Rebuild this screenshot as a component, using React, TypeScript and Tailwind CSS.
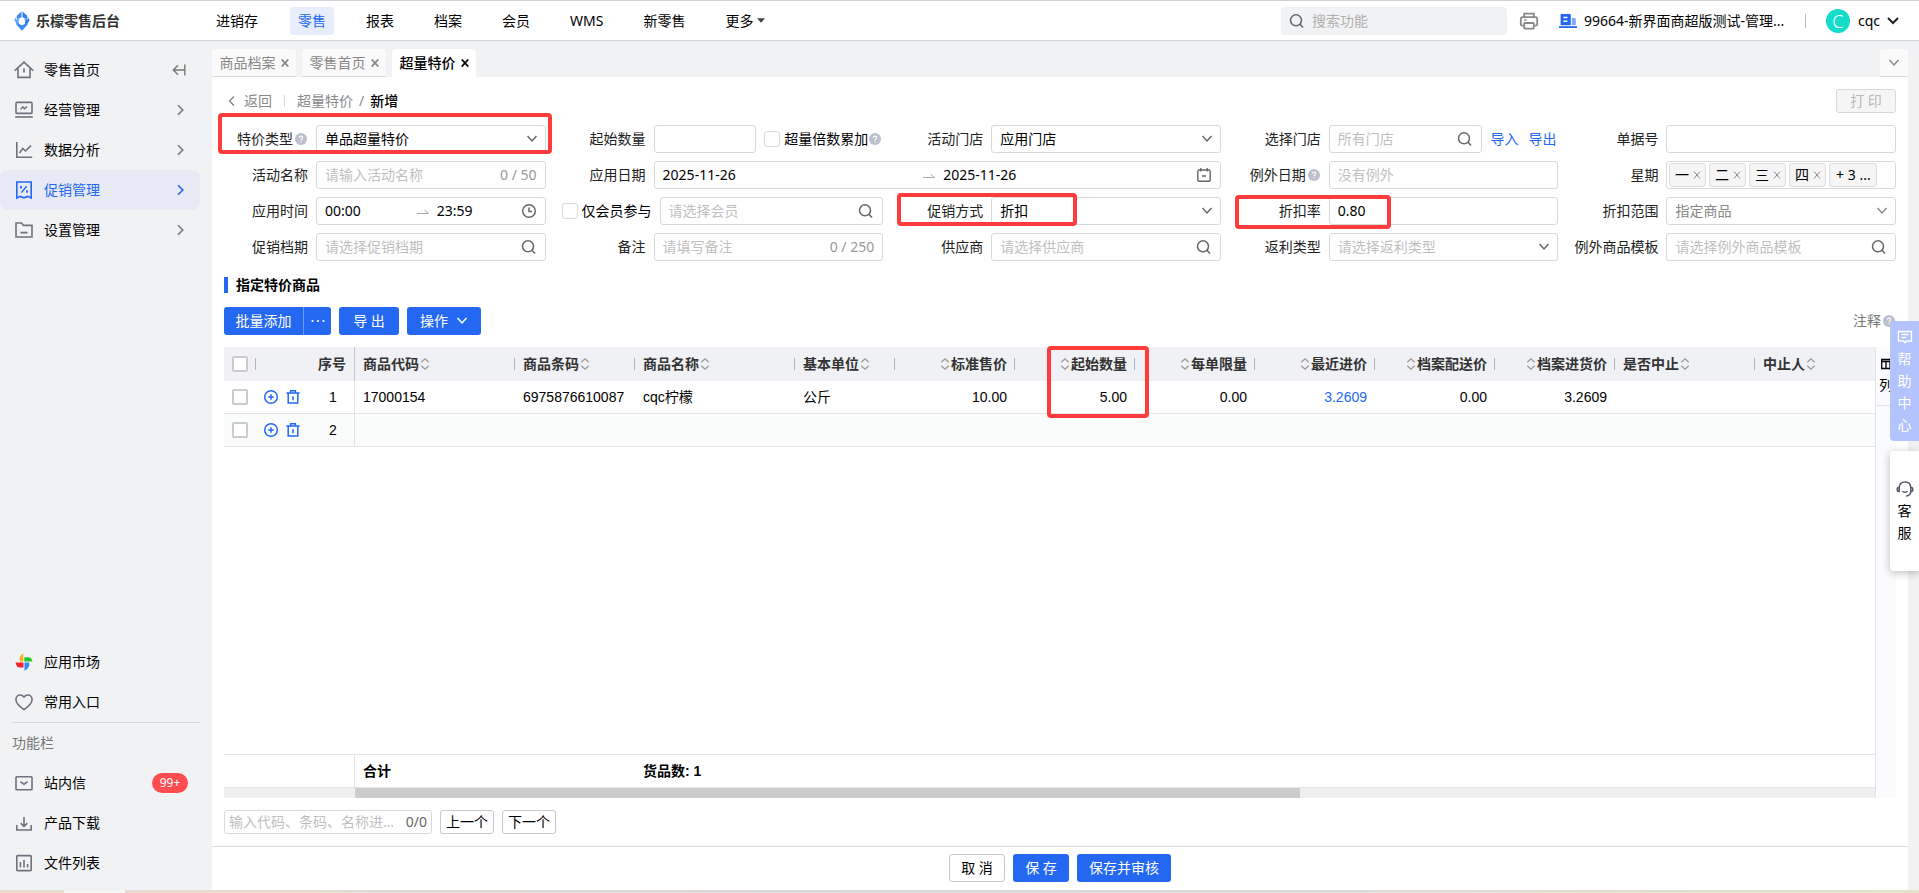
import type { ReactNode } from "react";

/* ---------- icons ---------- */

type IconProps = { className?: string };

function Stroke({ className = "", size = 16, width = 1.5, box = 16, children }: IconProps & { size?: number; width?: number; box?: number; children: ReactNode }) {
  return (
    <svg className={`shrink-0 ${className}`} width={size} height={size} viewBox={`0 0 ${box} ${box}`} fill="none" stroke="currentColor" strokeWidth={width} aria-hidden="true">
      {children}
    </svg>
  );
}

const SearchIcon = ({ className = "text-[#666]" }: IconProps) => (
  <Stroke className={className}><circle cx="7" cy="7.3" r="5.5" /><path d="M11 11.3 14 14.6" /></Stroke>
);
const DownIcon = ({ className = "text-[#666]" }: IconProps) => (
  <Stroke className={className} size={12} box={12}><path d="M1.5 3 6 8l4.500-5" /></Stroke>
);
const ClockIcon = () => (
  <Stroke className="text-[#666]"><circle cx="8" cy="8" r="6.3" /><path d="M8 4.5V8.5h3.2" /></Stroke>
);
const CalendarIcon = () => (
  <Stroke className="text-[#666]" width={1.4}><rect x="1.8" y="3" width="12.4" height="11.3" rx="1.5" /><path d="M4.8 1v3.6M11.2 1v3.6M6 9h4" /></Stroke>
);
const RangeArrow = () => (
  <Stroke className="text-[#aaa]" size={12} box={12} width={1}><path d="M0 8.5h11.5L7.5 5" /></Stroke>
);
const CloseIcon = ({ className = "" }: IconProps) => (
  <Stroke className={className} size={8} box={8} width={1}><path d="M1 0.5 7 7.5M7 0.5 1 7.5" /></Stroke>
);
const TabCloseIcon = () => (
  <Stroke size={8} box={8} width={1.8}><path d="M.7.5l6.6 7M7.3.5.7 7.5" /></Stroke>
);
const HelpIcon = ({ className = "" }: IconProps) => (
  <svg className={`shrink-0 ${className}`} width="12" height="12" viewBox="0 0 12 12" aria-hidden="true">
    <circle cx="6" cy="6" r="6" fill="#bcc0cc" />
    <path d="M4.3 4.8C4.3 3.7 5 3.1 6 3.1s1.7.6 1.7 1.5C7.7 5.7 6 5.8 6 7.2M6 8.2v1.1" fill="none" stroke="#fff" strokeWidth="1.1" />
  </svg>
);
const SortIcon = () => (
  <Stroke className="text-[#999]" size={12} box={12} width={1.2}><path d="M2.3 4.2 6 .8l3.7 3.4M2.3 7.8 6 11.2l3.7-3.4" /></Stroke>
);
const HomeIcon = () => (
  <Stroke size={20} box={20} width={1.6}><path d="M.8 10.6 10 2.2l9.2 8.4M4 8.6v8.8h12V8.6M10 8.2v4.2" /></Stroke>
);
const MonitorIcon = () => (
  <Stroke size={20} box={20} width={1.6}><rect x="2" y="2.4" width="16" height="11" rx=".8" /><path d="M1.2 17h17.6" /><path d="m6.6 9.4 2.2-2.6 1.6 2 2.6-2.2" strokeWidth="1.4" /></Stroke>
);
const TrendIcon = () => (
  <Stroke size={20} box={20} width={1.6}><path d="M2.8 2v15.2h15.4M5.6 13l3.2-4.6 2.6 2.6 5.6-5.4" /></Stroke>
);
const PromoIcon = () => (
  <Stroke size={20} box={20} width={1.6}><path d="M2.8 2h14.4v16l-3.4-1.6L10 17.8l-3.8-1.4L2.8 18Z" /><path d="m7.4 12.6 5.2-6.4" strokeWidth="1.4" /><path d="M7 6v2.6M13 10.2v2.6" strokeWidth="1.8" /></Stroke>
);
const FolderIcon = () => (
  <Stroke size={20} box={20} width={1.6}><path d="M2 3h5.6l1.8 2.4H18V17H2ZM6.4 12.6h7.2" /></Stroke>
);
const HeartIcon = () => (
  <Stroke size={20} box={20} width={1.6}><path d="M10 17.6C4.6 14 1.9 11 1.9 7.6 1.9 4.8 3.9 3 6.2 3c1.6 0 3 .9 3.8 2 .8-1.1 2.2-2 3.8-2 2.3 0 4.3 1.8 4.3 4.6 0 3.4-2.7 6.4-8.1 10Z" /></Stroke>
);
const MailIcon = () => (
  <Stroke size={20} box={20} width={1.6}><rect x="2" y="3.8" width="16" height="13" rx=".8" /><path d="m6.4 8.6 3.6 2.6 3.6-2.6" /></Stroke>
);
const DownloadIcon = () => (
  <Stroke size={20} box={20} width={1.6}><path d="M2.8 12v5h14.4v-5M10 4v9.4M6.6 10.2 10 13.4l3.4-3.2" /></Stroke>
);
const ReportIcon = () => (
  <Stroke size={20} box={20} width={1.6}><rect x="2.8" y="2.6" width="14.4" height="15" rx=".8" /><path d="M6.4 9v5.4M10 7v7.4M13.6 11v3.4" /></Stroke>
);
const MarketIcon = () => (
  <svg className="shrink-0" width="20" height="20" viewBox="0 0 20 20" aria-hidden="true">
    <path d="M9.3 1.4C6 3 4.7 6.6 6.2 9.4h3.1Z" fill="#ffb020" />
    <path d="M10.3 5.2h4.2c2 0 3.4 1.6 4 4.2h-8.2Z" fill="#22c72e" />
    <path d="M1.5 10.4h8v5H6c-2.5 0-4-2-4.5-5Z" fill="#f5222d" />
    <path d="M10.5 10.4h4.7c.6 3.4-1 6.6-4.7 8.2Z" fill="#2f8cff" />
  </svg>
);
const LogoIcon = () => (
  <svg className="shrink-0" width="16" height="20" viewBox="0 0 16 20" aria-hidden="true">
    <path d="M7.5.4 2.8 4.8v3.4L7.5 6.2Z" fill="#3f86f8" />
    <path d="M8.5.4 13.2 4.8v3.4L8.5 6.2Z" fill="#2f7df8" />
    <path d="M2.2 5.6.4 9.2l4.2 6.2 1-1.4L4.4 10l1.4-2.6-3.6 1.4Z" fill="#5aa5fb" />
    <path d="M13.8 5.6 15.6 9.2l-4.2 6.2-1-1.4L11.6 10l-1.4-2.6 3.6 1.4Z" fill="#2a76f6" />
    <path d="M8 19.8 2.4 13.6V12L8 14.2 13.6 12v1.6Z" fill="#3b8bfa" />
  </svg>
);
const PrinterIcon = () => (
  <Stroke className="text-[#888]" size={20} box={20} width={1.8}><path d="M5.2 6.2V2.6h9.6v3.6M4.8 14.6H3.2c-.8 0-1.4-.6-1.4-1.4V8c0-1 .8-1.8 1.8-1.8h12.8c1 0 1.8.8 1.8 1.8v5.2c0 .8-.6 1.4-1.4 1.4h-1.6" /><rect x="5.2" y="12" width="9.6" height="5.6" rx=".6" /><path d="M5 9h2.6" strokeWidth="1.4" /></Stroke>
);
const BuildingIcon = () => (
  <svg className="shrink-0" width="18" height="16" viewBox="0 0 18 16" aria-hidden="true">
    <path d="M2.6 1h8.2c.6 0 1 .4 1 1v10.2H1.6V2c0-.6.4-1 1-1Z" fill="#2468f2" />
    <path d="M12.8 5h3c.6 0 1 .4 1 1v6.2h-4Z" fill="#7ea8f8" />
    <path d="M0 13.2h18V15H0Z" fill="#2468f2" />
    <path d="M4.4 4.6h4M4.4 8.2h4" stroke="#fff" strokeWidth="1.5" />
  </svg>
);
const PlusIcon = () => (
  <Stroke width={1.5}><circle cx="8" cy="8" r="6.3" /><path d="M5.2 8h5.6M8 5.2v5.6" /></Stroke>
);
const TrashIcon = () => (
  <Stroke width={1.5}><path d="M1.4 4h13.2M3.2 4v10h9.6V4M5.6 3.6V1.7h4.8v1.9M8 7.2v4" /></Stroke>
);

/* ---------- form pieces ---------- */

const box = "h-7 rounded-[3px] border border-[#d9d9d9] bg-white";
const Mark = ({ className }: { className: string }) => (
  <div className={`pointer-events-none absolute z-10 rounded-[4px] border-4 border-[#ff3b3b] ${className}`} />
);

function Field({ label, id, help, mark, className = "", children }: { label: string; id: string; help?: boolean; mark?: string; className?: string; children: ReactNode }) {
  return (
    <div className={`relative flex min-w-0 items-center gap-2 ${className}`}>
      <label htmlFor={id} className="flex w-[92px] shrink-0 items-center justify-end gap-0.5 whitespace-nowrap text-[#222]">
        {label}
        {help && <HelpIcon className="mr-px" />}
      </label>
      <div className="flex min-w-0 flex-1 items-center">{children}</div>
      {mark && <Mark className={mark} />}
    </div>
  );
}

function TextBox({ id, placeholder, value, icon, suffix }: { id: string; placeholder?: string; value?: string; icon?: ReactNode; suffix?: string }) {
  return (
    <div className={`${box} flex min-w-0 flex-1 items-center px-2`}>
      <input id={id} defaultValue={value} placeholder={placeholder} className="w-full min-w-0 flex-1 bg-transparent outline-none placeholder:text-[#bfbfbf]" />
      {suffix && <span className="shrink-0 text-[#999]">{suffix}</span>}
      {icon}
    </div>
  );
}

function RangeBox({ id, from, to, endLabel, icon }: { id: string; from: string; to: string; endLabel: string; icon: ReactNode }) {
  return (
    <div className={`${box} flex min-w-0 flex-1 items-center px-2`}>
      <input id={id} defaultValue={from} className="mr-2 min-w-0 flex-1 outline-none" />
      <RangeArrow />
      <input aria-label={endLabel} defaultValue={to} className="ml-2 min-w-0 flex-1 outline-none" />
      {icon}
    </div>
  );
}

function Select({ id, value, tone = "text-black", arrow }: { id: string; value: string; tone?: string; arrow?: string }) {
  return (
    <div className={`${box} relative min-w-0 flex-1`}>
      <select id={id} className={`h-full w-full appearance-none bg-transparent px-2 outline-none ${tone}`}>
        <option>{value}</option>
      </select>
      <DownIcon className={`pointer-events-none absolute top-[7px] right-[7px] ${arrow ?? "text-[#666]"}`} />
    </div>
  );
}

function Check({ id, label, className = "size-4 rounded-[3px] border border-[#d9d9d9]" }: { id: string; label?: string; className?: string }) {
  return <input id={id} type="checkbox" aria-label={label} className={`shrink-0 appearance-none bg-white checked:bg-[#2468f2] ${className}`} />;
}

function FilterForm() {
  return (
    <form className="-ml-2 grid grid-cols-5 gap-2">
      <Field id="kind" label="特价类型" help mark="-top-3 left-0.5 -right-1.5 -bottom-px">
        <Select id="kind" value="单品超量特价" />
      </Field>
      <Field id="start" label="起始数量">
        <TextBox id="start" />
        <div className="flex w-[127px] shrink-0 items-center pl-2">
          <Check id="multi" />
          <label htmlFor="multi" className="pl-1 whitespace-nowrap">超量倍数累加</label>
          <HelpIcon className="ml-px" />
        </div>
      </Field>
      <Field id="store" label="活动门店"><Select id="store" value="应用门店" /></Field>
      <Field id="pick" label="选择门店">
        <TextBox id="pick" placeholder="所有门店" icon={<SearchIcon />} />
        <a href="#import" className="pl-2 text-[#2468f2]">导入</a>
        <a href="#export" className="pr-0.5 pl-2.5 text-[#2468f2]">导出</a>
      </Field>
      <Field id="bill" label="单据号"><TextBox id="bill" /></Field>

      <Field id="name" label="活动名称"><TextBox id="name" placeholder="请输入活动名称" suffix="0 / 50" /></Field>
      <Field id="date" label="应用日期" className="col-span-2">
        <RangeBox id="date" from="2025-11-26" to="2025-11-26" endLabel="结束日期" icon={<CalendarIcon />} />
      </Field>
      <Field id="except" label="例外日期" help><TextBox id="except" placeholder="没有例外" /></Field>
      <Field id="week" label="星期">
        <div className={`${box} flex min-w-0 flex-1 items-center gap-[3px] px-0.5`}>
          {["一", "二", "三", "四"].map((d, i) => (
            <button key={d} id={i === 0 ? "week" : undefined} type="button" aria-label={`移除星期${d}`} className="flex h-6 w-[37px] shrink-0 items-center justify-center gap-1 rounded-[3px] border border-[#ddd] bg-[#f5f5f5]">
              {d}<CloseIcon className="text-[#888]" />
            </button>
          ))}
          <span className="flex h-6 w-12 items-center justify-center rounded-[3px] border border-[#ddd] bg-[#f5f5f5] whitespace-nowrap">+ 3 ...</span>
        </div>
      </Field>

      <Field id="time" label="应用时间">
        <RangeBox id="time" from="00:00" to="23:59" endLabel="结束时间" icon={<ClockIcon />} />
      </Field>
      <div className="flex min-w-0 items-center pl-2">
        <Check id="vip" />
        <label htmlFor="vip" className="pr-2 pl-1 whitespace-nowrap">仅会员参与</label>
        <TextBox id="member" placeholder="请选择会员" icon={<SearchIcon />} />
      </div>
      <Field id="way" label="促销方式" mark="-top-1 left-1.5 right-36 -bottom-px">
        <Select id="way" value="折扣" />
      </Field>
      <Field id="rate" label="折扣率" mark="-top-0.5 left-1.5 right-[167px] -bottom-1">
        <TextBox id="rate" value="0.80" />
      </Field>
      <Field id="scope" label="折扣范围"><Select id="scope" value="指定商品" tone="text-[#888]" arrow="text-[#888]" /></Field>

      <Field id="period" label="促销档期"><TextBox id="period" placeholder="请选择促销档期" icon={<SearchIcon />} /></Field>
      <Field id="memo" label="备注"><TextBox id="memo" placeholder="请填写备注" suffix="0 / 250" /></Field>
      <Field id="vendor" label="供应商"><TextBox id="vendor" placeholder="请选择供应商" icon={<SearchIcon />} /></Field>
      <Field id="rebate" label="返利类型"><Select id="rebate" value="请选择返利类型" tone="text-[#bfbfbf]" /></Field>
      <Field id="tpl" label="例外商品模板"><TextBox id="tpl" placeholder="请选择例外商品模板" icon={<SearchIcon />} /></Field>
    </form>
  );
}

/* ---------- goods table ---------- */

const columns = [
  { name: "商品代码", value: "17000154", width: "w-[160px]" },
  { name: "商品条码", value: "6975876610087", width: "w-[120px]" },
  { name: "商品名称", value: "cqc柠檬", width: "w-[160px]" },
  { name: "基本单位", value: "公斤", width: "w-[100px]" },
  { name: "标准售价", value: "10.00", width: "w-[120px]", right: true },
  { name: "起始数量", value: "5.00", width: "w-[120px]", right: true, mark: true },
  { name: "每单限量", value: "0.00", width: "w-[120px]", right: true },
  { name: "最近进价", value: "3.2609", width: "w-[120px]", right: true, link: true },
  { name: "档案配送价", value: "0.00", width: "w-[120px]", right: true },
  { name: "档案进货价", value: "3.2609", width: "w-[120px]", right: true },
  { name: "是否中止", value: "", width: "w-[140px]" },
  { name: "中止人", value: "", width: "w-auto", last: true },
];

const Columns = () => (
  <colgroup>
    <col className="w-[131px]" />
    {columns.map((c) => <col key={c.name} className={c.width} />)}
  </colgroup>
);

const gridCheck = "size-4 rounded-[2px] border-2 border-[#ccc]";

function GoodsTable() {
  return (
    <div className="flex min-h-0 flex-1">
      <div className="flex min-w-0 flex-1 flex-col font-['Liberation_Sans','Noto_Sans_CJK_SC',sans-serif]">
        <table className="w-full table-fixed border-separate border-spacing-0">
          <Columns />
          <thead>
            <tr className="h-[34px] bg-[#f0f1f4] text-[#333]">
              <th className="border-r border-[#c4c6cc] p-0 px-2">
                <div className="flex items-center">
                  <Check id="all" label="全选" className={gridCheck} />
                  <i className="ml-[7px] h-3 w-px bg-[#b0b4c0]" />
                  <span className="ml-auto font-bold">序号</span>
                </div>
              </th>
              {columns.map((c) => (
                <th key={c.name} className="relative p-0 px-2 font-bold">
                  <div className={c.right ? "flex flex-row-reverse items-center" : "flex items-center"}>
                    <span className="whitespace-nowrap">{c.name}</span>
                    <SortIcon />
                  </div>
                  {!c.last && <i className="absolute top-[11px] right-0 h-3 w-px bg-[#b0b4c0]" />}
                  {c.mark && <Mark className="-top-px -right-3.5 left-8 h-[72px]" />}
                </th>
              ))}
            </tr>
          </thead>
          <tbody>
            {[1, 2].map((n) => (
              <tr key={n} className={n === 2 ? "h-[33px] bg-[#fafbfb]" : "h-[33px]"}>
                <td className="border-r border-b border-[#e4e4e4] p-0 pl-2">
                  <div className="flex items-center text-[#2468f2]">
                    <Check id={`row${n}`} label={`选择第${n}行`} className={gridCheck} />
                    <button type="button" aria-label="添加" className="ml-[15px]"><PlusIcon /></button>
                    <button type="button" aria-label="删除" className="ml-1.5"><TrashIcon /></button>
                    <span className="ml-auto w-[42px] text-center text-black">{n}</span>
                  </div>
                </td>
                {columns.map((c) => (
                  <td key={c.name} className={`border-b border-[#e6e6e6] p-0 px-2 whitespace-nowrap ${c.right ? "text-right" : "text-left"} ${c.link ? "text-[#2468f2]" : ""}`}>
                    {n === 1 ? c.value : ""}
                  </td>
                ))}
              </tr>
            ))}
          </tbody>
        </table>
        <div className="flex-1" />
        <table className="w-full table-fixed border-separate border-spacing-0 border-y border-[#e6e6e6]">
          <Columns />
          <tbody>
            <tr className="h-8 font-bold">
              <td className="border-r border-[#e4e4e4]" />
              <td className="px-2 py-0" colSpan={2}>合计</td>
              <td className="px-2 py-0" colSpan={10}>货品数: 1</td>
            </tr>
          </tbody>
        </table>
        <div className="flex h-2.5 bg-[#efefef] pl-[131px]"><div className="w-[62.2%] bg-[#ccc]" /></div>
      </div>
      <aside className="w-[21px] shrink-0 border-l border-[#e3e4e8] bg-[#fafbfd]">
        <button type="button" className="flex h-[59px] w-full flex-col items-start justify-center gap-1 border-b border-[#e3e4e8] pl-[3px] leading-5">
          <Stroke className="ml-0.5 text-black" size={14} box={14} width={1.3}><path d="M.7 2.5h12.6v9H.7zM5 4.500v7M9 4.500v7M.7 4.500h12.600" /></Stroke>
          列
        </button>
      </aside>
    </div>
  );
}

/* ---------- shell ---------- */

const menu = [
  { name: "零售首页", icon: <HomeIcon /> },
  { name: "经营管理", icon: <MonitorIcon /> },
  { name: "数据分析", icon: <TrendIcon /> },
  { name: "促销管理", icon: <PromoIcon />, active: true },
  { name: "设置管理", icon: <FolderIcon /> },
];

const item = "flex h-10 w-full items-center gap-2.5 px-3.5";
const primary = "h-7 rounded-[3px] bg-[#2468f2] text-white";
const plain = "rounded-[3px] border border-[#c9c9c9] bg-white";

function Header() {
  return (
    <header className="flex h-[41px] shrink-0 items-center border-t border-b border-[#d2d2d4] bg-white pr-5 pl-3.5">
      <LogoIcon />
      <h1 className="ml-1.5 w-[164px] shrink-0 font-bold text-[#333]">乐檬零售后台</h1>
      <nav className="ml-2 flex gap-6">
        {["进销存", "零售", "报表", "档案", "会员", "WMS", "新零售", "更多"].map((n) => (
          <a key={n} href={`#${n}`} className={`flex h-7 items-center rounded-[4px] px-2 whitespace-nowrap ${n === "零售" ? "bg-[#e8edfb] text-[#2468f2]" : ""}`}>
            {n}
            {n === "更多" && <svg className="ml-1" width="8" height="5" viewBox="0 0 8 5" aria-hidden="true"><path d="M0 .3h8L4 4.7Z" fill="#444" /></svg>}
          </a>
        ))}
      </nav>
      <div className="ml-auto flex h-7 w-[226px] items-center gap-[7px] rounded-[4px] bg-[#f1f2f4] pl-2">
        <SearchIcon />
        <input aria-label="搜索功能" placeholder="搜索功能" className="min-w-0 flex-1 bg-transparent outline-none placeholder:text-[#b0b0b0]" />
      </div>
      <button type="button" aria-label="打印" className="ml-3"><PrinterIcon /></button>
      <div className="ml-5 flex w-[246px] items-center gap-[7px]">
        <BuildingIcon />
        <span className="whitespace-nowrap">99664-新界面商超版测试-管理...</span>
      </div>
      <i className="h-3.5 w-px bg-[#bbb]" />
      <button type="button" className="ml-5 flex items-center">
        <span className="flex size-6 items-center justify-center rounded-full bg-[#14dccb] text-lg leading-6 font-light text-white">C</span>
        <span className="mr-[7px] ml-2">cqc</span>
        <Stroke className="text-[#222]" size={12} box={12} width={2}><path d="M1 3 6 8l5-5" /></Stroke>
      </button>
    </header>
  );
}

function Sidebar() {
  return (
    <aside className="flex w-[212px] shrink-0 flex-col pt-[9px] pr-3 text-black">
      {menu.map((m, i) => (
        <button key={m.name} type="button" className={`${item} ${m.active ? "rounded-lg bg-[#e7eaf5] text-[#2468f2]" : ""}`}>
          <span className={m.active ? "text-[#2468f2]" : "text-[#70707e]"}>{m.icon}</span>
          {m.name}
          {i === 0 ? (
            <Stroke className="ml-auto text-[#777]" size={14} box={14} width={1.4}><path d="M12.8 1.5v11M12 7H1.5M6 2.2 1.3 7 6 11.8" /></Stroke>
          ) : (
            <Stroke className={m.active ? "ml-auto" : "ml-auto text-[#777]"} size={12} box={12} width={1.6}><path d="M4 1.2 8.8 6 4 10.8" /></Stroke>
          )}
        </button>
      ))}
      <div className="flex-1" />
      <button type="button" className={item}><MarketIcon />应用市场</button>
      <button type="button" className={item}><span className="text-[#70707e]"><HeartIcon /></span>常用入口</button>
      <div className="ml-3 flex h-[41px] items-center border-t border-[#d5d6d9] text-[#777]">功能栏</div>
      <button type="button" className={item}>
        <span className="text-[#70707e]"><MailIcon /></span>站内信
        <span className="mr-[-2px] ml-auto flex h-5 w-9 items-center justify-center rounded-full bg-[#ff4d4f] text-xs text-white">99+</span>
      </button>
      <button type="button" className={item}><span className="text-[#70707e]"><DownloadIcon /></span>产品下载</button>
      <button type="button" className={`${item} mb-[7px]`}><span className="text-[#70707e]"><ReportIcon /></span>文件列表</button>
    </aside>
  );
}

export default function App() {
  return (
    <div className="relative flex h-screen flex-col overflow-hidden bg-[#f1f2f4] font-['Noto_Sans','Noto_Sans_CJK_SC',sans-serif] text-sm leading-5 text-black">
      <Header />
      <div className="flex min-h-0 flex-1">
        <Sidebar />
        <div className="mr-[11px] flex min-w-0 flex-1 flex-col pt-2">
          <div className="flex gap-1.5">
            {["商品档案", "零售首页", "超量特价"].map((t, i) => (
              <button key={t} type="button" className={`flex h-7 w-[84px] items-center justify-center gap-[5px] rounded-t-[4px] ${i === 2 ? "bg-white font-medium" : "border-b border-[#d9d9d9] bg-[#fafafa] text-[#888]"}`}>
                {t}<TabCloseIcon />
              </button>
            ))}
            <button type="button" aria-label="更多标签" className="ml-auto flex h-7 w-7 items-center justify-center rounded-t-[4px] border-b border-[#d9d9d9] bg-[#fafafa]"><DownIcon className="text-[#888]" /></button>
          </div>
          <main className="flex min-h-0 flex-1 flex-col bg-white">
            <div className="flex min-h-0 flex-1 flex-col px-3 pt-3">
              <div className="mb-3 flex h-6 items-center text-[#888]">
                <a href="#back" className="flex items-center gap-1.5 pl-0.5">
                  <Stroke size={12} box={12} width={1.4}><path d="M8 1.5 3.5 6 8 10.5" /></Stroke>返回
                </a>
                <i className="mx-3 h-3 w-px bg-[#d9d9d9]" />
                <span>超量特价</span>
                <span className="mx-1.5">/</span>
                <span className="font-medium text-black">新增</span>
                <button type="button" disabled className="ml-auto h-6 w-[60px] rounded-[3px] border border-[#d9d9d9] bg-[#f5f5f5] text-[#b8b8b8]">打 印</button>
              </div>
              <FilterForm />
              <h2 className="mt-3.5 flex items-center gap-2 font-bold"><i className="h-4 w-1 bg-[#2468f2]" />指定特价商品</h2>
              <div className="mt-3 mb-3 flex items-center gap-2">
                <div className="flex">
                  <button type="button" className="h-7 w-[79px] rounded-l-[3px] bg-[#2468f2] text-white">批量添加</button>
                  <button type="button" aria-label="更多添加方式" className="flex h-7 w-7 items-center justify-center rounded-r-[3px] border-l border-[#6c9bf7] bg-[#2468f2]">
                    <svg width="14" height="4" viewBox="0 0 14 4" fill="#fff" aria-hidden="true"><circle cx="1.5" cy="2" r="1.1" /><circle cx="7" cy="2" r="1.1" /><circle cx="12.5" cy="2" r="1.1" /></svg>
                  </button>
                </div>
                <button type="button" className={`${primary} w-[60px]`}>导 出</button>
                <button type="button" className={`${primary} flex w-[74px] items-center justify-center gap-2`}>操作<DownIcon className="text-white" /></button>
                <span className="ml-auto flex items-center gap-0.5 pr-px text-[#777]">注释<HelpIcon /></span>
              </div>
              <GoodsTable />
              <div className="mt-3 mb-3 flex gap-2">
                <div className="flex h-6 w-52 items-center rounded-[3px] border border-[#d9d9d9] px-1">
                  <input aria-label="查找商品" placeholder="输入代码、条码、名称进行查找" className="min-w-0 flex-1 text-ellipsis outline-none placeholder:text-[#bfbfbf]" />
                  <span className="pl-2 text-[#666]">0/0</span>
                </div>
                <button type="button" className={`${plain} h-6 w-[54px] whitespace-nowrap`}>上一个</button>
                <button type="button" className={`${plain} h-6 w-[54px] whitespace-nowrap`}>下一个</button>
              </div>
            </div>
            <footer className="flex h-11 shrink-0 items-center justify-center gap-2 border-t border-[#dcdcde] pb-px">
              <button type="button" className={`${plain} h-7 w-14`}>取 消</button>
              <button type="button" className={`${primary} w-14`}>保 存</button>
              <button type="button" className={`${primary} w-[94px]`}>保存并审核</button>
            </footer>
          </main>
        </div>
      </div>
      <div className="flex h-[3px] shrink-0 bg-linear-to-r from-[#eadccf] via-[#d9d9dc] to-[#e6e2cf]">
        <i className="ml-16 w-[61px] bg-[#f7f5f2]" />
      </div>

      <div className="absolute top-[321px] right-0 flex w-[29px] flex-col gap-2.5">
        <a href="#help" className="flex h-[120px] flex-col items-center rounded-l-[4px] bg-[#b3c3fd] pt-2 leading-[22px] text-white">
          <Stroke size={16} width={1.3}><path d="M1.5 2.5h13v9.5H9.6L8 13.8 6.4 12H1.5ZM4.5 5.5h7M4.5 8.5h4.5" /></Stroke>
          <span className="mt-[3px] w-3.5 break-all">帮助中心</span>
        </a>
        <a href="#service" className="flex h-[120px] flex-col items-center rounded-l-[4px] bg-white pt-[29px] leading-[22px] shadow-[0_2px_8px_rgba(0,0,0,0.25)]">
          <Stroke className="text-[#555b6e]" size={18} box={18} width={1.5}><path d="M3.2 8C3.2 4 5.6 2 9 2s5.8 2 5.8 6M3.2 7.2C1.8 7.2 1.2 8 1.2 9.4s.6 2.2 2 2.2ZM14.8 7.2c1.4 0 2 .8 2 2.2s-.6 2.2-2 2.2ZM14.8 11.6c0 2.6-2 4-4.6 4.6M6.4 11.2c1.6 1.4 3.6 1.4 5.2 0" /></Stroke>
          <span className="mt-0.5 w-3.5 break-all">客服</span>
        </a>
      </div>
    </div>
  );
}
